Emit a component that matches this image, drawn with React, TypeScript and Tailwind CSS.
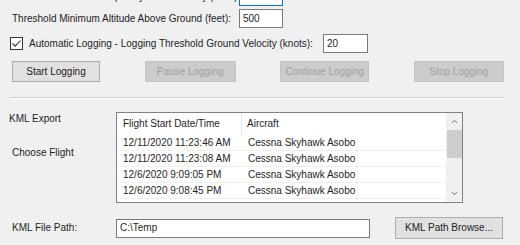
import { ChevronUp, ChevronDown } from "lucide-react";

const flights = [
  { start: "12/11/2020 11:23:46 AM", aircraft: "Cessna Skyhawk Asobo" },
  { start: "12/11/2020 11:23:08 AM", aircraft: "Cessna Skyhawk Asobo" },
  { start: "12/6/2020 9:09:05 PM", aircraft: "Cessna Skyhawk Asobo" },
  { start: "12/6/2020 9:08:45 PM", aircraft: "Cessna Skyhawk Asobo" },
];

function WinButton({ label, disabled = false, className = "" }: { label: string; disabled?: boolean; className?: string }) {
  return (
    <div
      className={
        "flex items-center justify-center border whitespace-nowrap " +
        (disabled
          ? "bg-[#cccccc] border-[#c4c4c4] text-[#a0a0a0] "
          : "bg-[#e1e1e1] border-[#adadad] text-[#222] ") +
        className
      }
    >
      {label}
    </div>
  );
}

function TextBox({ value, className = "", focused = false }: { value: string; className?: string; focused?: boolean }) {
  return (
    <div
      className={
        "h-[19px] bg-white border flex items-center pl-[3px] whitespace-nowrap " +
        (focused ? "border-[#0078d7] " : "border-[#7a7a7a] ") +
        className
      }
    >
      {value}
    </div>
  );
}

export default function App() {
  return (
    <div
      className="w-[520px] h-[245px] overflow-hidden bg-[#f0f0f0] text-[10px] leading-none text-[#1e1e1e]"
      style={{ fontFamily: '"Liberation Sans", Arial, sans-serif' }}
    >
      {/* logging thresholds */}
      <div className="flex items-center h-[19px] mt-[-13px]">
        <span className="ml-[12px] w-[227px] whitespace-nowrap">FS2020 Threshold Frequency to Write Entry (secs):</span>
        <TextBox value="1" focused className="w-[44px]" />
      </div>
      <div className="flex items-center h-[19px] mt-[3px]">
        <span className="ml-[12px] w-[227px] whitespace-nowrap">Threshold Minimum Altitude Above Ground (feet):</span>
        <TextBox value="500" className="w-[44px]" />
      </div>
      <div className="flex items-center h-[19px] mt-[6px]">
        <div className="ml-[10px] w-[13px] h-[13px] border border-[#333] bg-white flex items-center justify-center">
          <svg width="11" height="11" viewBox="0 0 11 11">
            <path d="M1.5 5.5 L4.2 8.2 L9.5 2.5" fill="none" stroke="#333" strokeWidth="1.1" />
          </svg>
        </div>
        <span className="ml-[6px] w-[294px] whitespace-nowrap">Automatic Logging - Logging Threshold Ground Velocity (knots):</span>
        <TextBox value="20" className="w-[45px]" />
      </div>

      {/* logging buttons */}
      <div className="flex items-center justify-between mt-[8px] ml-[12px] mr-[16px]">
        <WinButton label="Start Logging" className="w-[88px] h-[21px]" />
        <WinButton label="Pause Logging" disabled className="w-[91px] h-[21px]" />
        <WinButton label="Continue Logging" disabled className="w-[89px] h-[21px]" />
        <WinButton label="Stop Logging" disabled className="w-[90px] h-[21px]" />
      </div>

      <div className="mt-[15px] ml-[10px] mr-[15px] border-t border-b border-t-[#cbcbcb] border-b-white" />

      {/* KML export */}
      <div className="flex mt-[13px]">
        <div className="w-[116px] shrink-0">
          <div className="ml-[9px] mt-[2px]">KML Export</div>
          <div className="ml-[12px] mt-[24px]">Choose Flight</div>
        </div>
        <div className="w-[347px] h-[91px] bg-white border border-[#828282] flex overflow-hidden">
          <div className="flex-1 flex flex-col">
            <div className="flex h-[22px] items-center shrink-0 whitespace-nowrap">
              <div className="w-[125px] pl-[6px] border-r border-[#e5e5e5] h-full flex items-center">Flight Start Date/Time</div>
              <div className="pl-[5px]">Aircraft</div>
            </div>
            {flights.map((f) => (
              <div key={f.start} className="flex h-[16px] items-center shrink-0 border-b border-[#f0f0f0] whitespace-nowrap">
                <div className="w-[125px] pl-[6px]">{f.start}</div>
                <div className="pl-[6px]">{f.aircraft}</div>
              </div>
            ))}
          </div>
          <div className="w-[16px] shrink-0 bg-[#f0f0f0] flex flex-col items-center">
            <div className="h-[17px] flex items-center justify-center text-[#606060]">
              <ChevronUp size={9} strokeWidth={2.5} />
            </div>
            <div className="w-[15px] h-[28px] bg-[#cdcdcd]" />
            <div className="flex-1" />
            <div className="h-[17px] flex items-center justify-center text-[#606060]">
              <ChevronDown size={9} strokeWidth={2.5} />
            </div>
          </div>
        </div>
      </div>

      {/* file path */}
      <div className="flex items-center h-[22px] mt-[14px]">
        <span className="ml-[12px] w-[104px] whitespace-nowrap">KML File Path:</span>
        <TextBox value="C:\Temp" className="w-[254px]" />
        <WinButton label="KML Path Browse..." className="ml-[25px] w-[108px] h-[22px]" />
      </div>
    </div>
  );
}
